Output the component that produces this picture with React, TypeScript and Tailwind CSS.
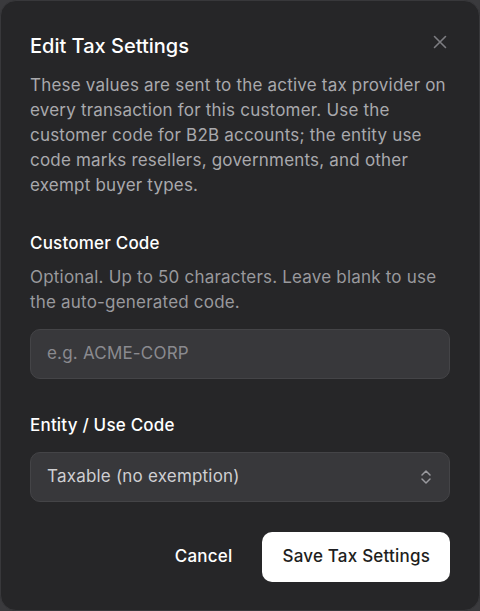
import React from "react";

export default function App() {
  return (
    <div
      className="w-[480px] h-[611px] bg-[#3a3a3d] overflow-hidden"
      style={{ fontFamily: "Inter, 'Noto Sans', sans-serif" }}
    >
      <div className="relative w-full h-full rounded-[16px] border border-[#38383b] bg-[#262628] px-[29px] pt-[31px] tracking-[0.2px]">
        <button className="absolute right-[31px] top-[33px] text-[#7d7d82]">
          <svg width="16" height="16" viewBox="0 0 16 16" fill="none" stroke="currentColor" strokeWidth="1.6" strokeLinecap="round">
            <path d="M2.5 2.5l11 11M13.5 2.5l-11 11" />
          </svg>
        </button>
        <h2 className="text-[20px] leading-[28px] font-medium text-white tracking-[0px]">Edit Tax Settings</h2>
        <p className="mt-[13px] text-[17px] leading-[25px] text-[#a9a9ad]">
          These values are sent to the active tax provider on every transaction for this customer. Use the customer code for B2B accounts; the entity use code marks resellers, governments, and other exempt buyer types.
        </p>

        <div className="mt-[33px] text-[17px] leading-[24px] font-medium text-white">Customer Code</div>
        <p className="mt-[10px] text-[17px] leading-[25px] text-[#99999d]">
          Optional. Up to 50 characters. Leave blank to use the auto-generated code.
        </p>
        <div className="mt-[14px] h-[50px] rounded-[10px] border border-[#444447] bg-[#38383b] flex items-center px-[16px] text-[17px] text-[#8a8a8f]">
          e.g. ACME-CORP
        </div>

        <div className="mt-[34px] text-[17px] leading-[24px] font-medium text-white">Entity / Use Code</div>
        <div className="mt-[15px] h-[50px] rounded-[10px] border border-[#444447] bg-[#38383b] flex items-center justify-between px-[16px] text-[17px] text-[#cfcfd2]">
          <span>Taxable (no exemption)</span>
          <svg width="14" height="20" viewBox="0 0 14 20" fill="none" stroke="#9a9a9f" strokeWidth="1.5" strokeLinecap="round" strokeLinejoin="round">
            <path d="M3 8l4-4 4 4M3 12l4 4 4-4" />
          </svg>
        </div>

        <div className="mt-[30px] flex items-center justify-end gap-[30px]">
          <button className="text-[17px] font-medium text-white">Cancel</button>
          <button className="h-[50px] px-[20px] rounded-[10px] bg-white text-[17px] font-medium text-[#1e1e20]">
            Save Tax Settings
          </button>
        </div>
      </div>
    </div>
  );
}
